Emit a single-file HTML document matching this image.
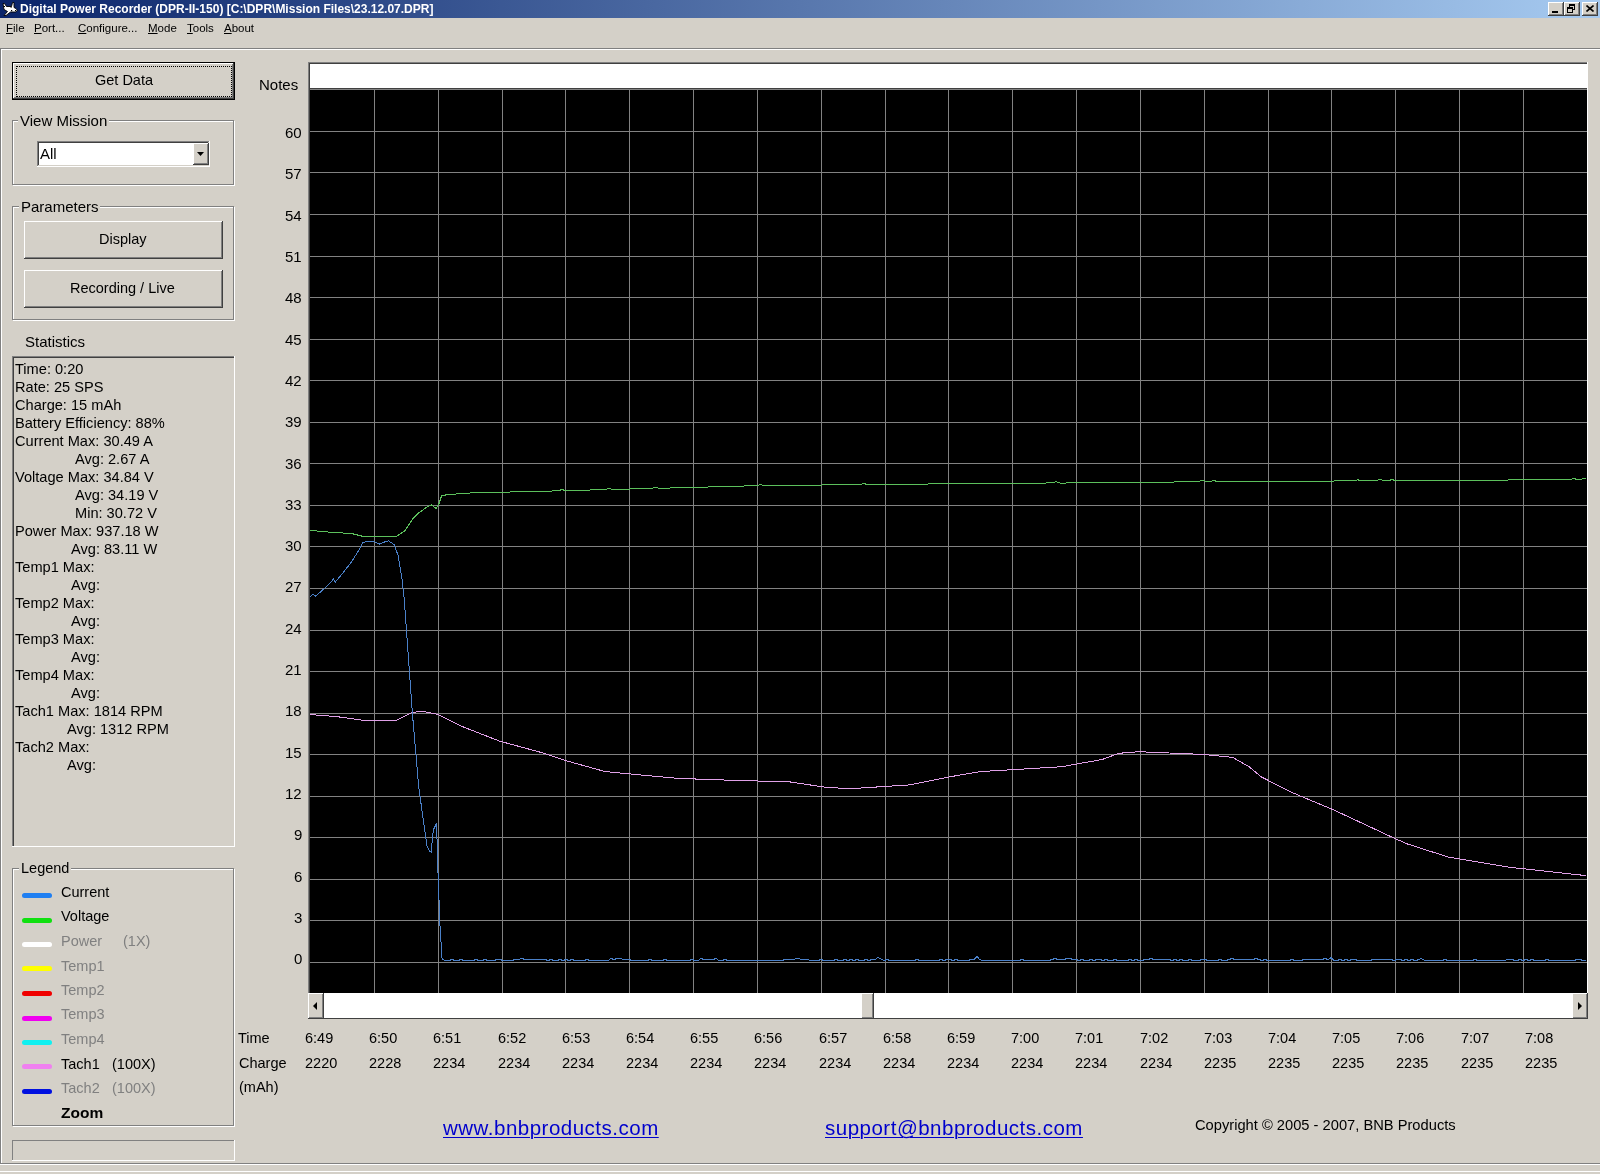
<!DOCTYPE html><html><head><meta charset="utf-8"><style>
html,body{margin:0;padding:0}
body{width:1600px;height:1174px;overflow:hidden;background:#d4d0c8;position:relative;font-family:"Liberation Sans",sans-serif;color:#000}
.t{position:absolute;white-space:nowrap;will-change:transform}
u{text-decoration:underline}
</style></head><body>
<div style="position:absolute;left:0;top:0;width:1600px;height:18px;background:linear-gradient(to right,#0a246a,#a6caf0)"></div>
<div class="t" style="left:20px;top:1.84px;font-size:12px;line-height:14px;color:#fff;font-weight:bold">Digital Power Recorder (DPR-II-150) [C:\DPR\Mission Files\23.12.07.DPR]</div>
<svg style="position:absolute;left:2px;top:2px" width="17" height="15" viewBox="0 0 17 15">
<path d="M1 1.5 L2.5 1.5 L4.5 4.5 L9.5 4.5 L10.5 0.5 L12 0.5 L12 5.5 L14 6.5 L15.5 8.5 L13.5 10 L8.5 10 L4 13.5 L2 13.5 L5.5 9.5 L2 7.5 Z" fill="#fff" stroke="#000" stroke-width="0.9"/><rect x="2" y="4" width="1" height="1" fill="#000"/><rect x="8.5" y="4.5" width="1.2" height="1.2" fill="#000"/><rect x="9" y="8" width="1.2" height="1.2" fill="#000"/><rect x="13" y="8" width="1.2" height="1.2" fill="#000"/>
</svg>
<div style="position:absolute;left:1548px;top:2px;width:16px;height:14px;background:#404040"></div>
<div style="position:absolute;left:1548px;top:2px;width:15px;height:13px;background:#fff"></div>
<div style="position:absolute;left:1549px;top:3px;width:14px;height:12px;background:#808080"></div>
<div style="position:absolute;left:1549px;top:3px;width:13px;height:11px;background:#d4d0c8"></div>
<div style="position:absolute;left:1552px;top:11px;width:6px;height:2px;background:#000"></div>
<div style="position:absolute;left:1564px;top:2px;width:16px;height:14px;background:#404040"></div>
<div style="position:absolute;left:1564px;top:2px;width:15px;height:13px;background:#fff"></div>
<div style="position:absolute;left:1565px;top:3px;width:14px;height:12px;background:#808080"></div>
<div style="position:absolute;left:1565px;top:3px;width:13px;height:11px;background:#d4d0c8"></div>
<svg style="position:absolute;left:1567px;top:4px" width="9" height="9"><rect x="2.5" y="0.5" width="5" height="5" fill="none" stroke="#000"/><rect x="2" y="0" width="6" height="2" fill="#000"/><rect x="0.5" y="3.5" width="5" height="5" fill="#d4d0c8" stroke="#000"/><rect x="0" y="3" width="6" height="2" fill="#000"/></svg>
<div style="position:absolute;left:1582px;top:2px;width:16px;height:14px;background:#404040"></div>
<div style="position:absolute;left:1582px;top:2px;width:15px;height:13px;background:#fff"></div>
<div style="position:absolute;left:1583px;top:3px;width:14px;height:12px;background:#808080"></div>
<div style="position:absolute;left:1583px;top:3px;width:13px;height:11px;background:#d4d0c8"></div>
<svg style="position:absolute;left:1586px;top:5px" width="8" height="7"><path d="M0.5 0.5 L7.5 6.5 M7.5 0.5 L0.5 6.5" stroke="#000" stroke-width="1.6"/></svg>
<div class="t" style="left:6px;top:21.02px;font-size:11.5px;line-height:14px;"><u>F</u>ile</div>
<div class="t" style="left:34px;top:21.02px;font-size:11.5px;line-height:14px;"><u>P</u>ort...</div>
<div class="t" style="left:78px;top:21.02px;font-size:11.5px;line-height:14px;"><u>C</u>onfigure...</div>
<div class="t" style="left:148px;top:21.02px;font-size:11.5px;line-height:14px;"><u>M</u>ode</div>
<div class="t" style="left:187px;top:21.02px;font-size:11.5px;line-height:14px;"><u>T</u>ools</div>
<div class="t" style="left:224px;top:21.02px;font-size:11.5px;line-height:14px;"><u>A</u>bout</div>
<div style="position:absolute;left:0px;top:48px;width:1600px;height:1px;background:#808080"></div>
<div style="position:absolute;left:0px;top:49px;width:1600px;height:1px;background:#fff"></div>
<div style="position:absolute;left:0px;top:48px;width:1px;height:1116px;background:#808080"></div>
<div style="position:absolute;left:1px;top:49px;width:1px;height:1114px;background:#fff"></div>
<div style="position:absolute;left:0px;top:1163px;width:1600px;height:1px;background:#808080"></div>
<div style="position:absolute;left:0px;top:1164px;width:1600px;height:1px;background:#fff"></div>
<div style="position:absolute;left:0px;top:1171px;width:1600px;height:1px;background:#fff"></div>
<div style="position:absolute;left:12px;top:62px;width:223px;height:38px;background:#000"></div>
<div style="position:absolute;left:13px;top:63px;width:221px;height:36px;background:#404040"></div>
<div style="position:absolute;left:13px;top:63px;width:220px;height:35px;background:#fff"></div>
<div style="position:absolute;left:14px;top:64px;width:219px;height:34px;background:#808080"></div>
<div style="position:absolute;left:14px;top:64px;width:218px;height:33px;background:#d4d0c8"></div>
<div style="position:absolute;left:16px;top:66px;width:216px;height:31px;box-sizing:border-box;border:1px dotted #000"></div>
<div class="t" style="left:95px;top:72.48px;font-size:14.5px;line-height:17px;">Get Data</div>
<div style="position:absolute;left:13px;top:121px;width:222px;height:65px;box-sizing:border-box;border:1px solid #fff"></div>
<div style="position:absolute;left:12px;top:120px;width:222px;height:65px;box-sizing:border-box;border:1px solid #808080"></div>
<div style="position:absolute;left:18px;top:118px;width:91px;height:5px;background:#d4d0c8"></div>
<div class="t" style="left:20px;top:111.80px;font-size:15px;line-height:18px;">View Mission</div>
<div style="position:absolute;left:37px;top:141px;width:173px;height:26px;background:#fff"></div>
<div style="position:absolute;left:37px;top:141px;width:172px;height:25px;background:#808080"></div>
<div style="position:absolute;left:38px;top:142px;width:171px;height:24px;background:#d4d0c8"></div>
<div style="position:absolute;left:38px;top:142px;width:170px;height:23px;background:#404040"></div>
<div style="position:absolute;left:39px;top:143px;width:169px;height:22px;background:#fff"></div>
<div style="position:absolute;left:193px;top:143px;width:16px;height:22px;background:#404040"></div>
<div style="position:absolute;left:193px;top:143px;width:15px;height:21px;background:#fff"></div>
<div style="position:absolute;left:194px;top:144px;width:14px;height:20px;background:#808080"></div>
<div style="position:absolute;left:194px;top:144px;width:13px;height:19px;background:#d4d0c8"></div>
<svg style="position:absolute;left:197px;top:152px" width="7" height="4"><path d="M0 0 H7 L3.5 4 Z" fill="#000"/></svg>
<div class="t" style="left:40px;top:144.80px;font-size:15px;line-height:18px;">All</div>
<div style="position:absolute;left:13px;top:207px;width:222px;height:114px;box-sizing:border-box;border:1px solid #fff"></div>
<div style="position:absolute;left:12px;top:206px;width:222px;height:114px;box-sizing:border-box;border:1px solid #808080"></div>
<div style="position:absolute;left:19px;top:204px;width:81px;height:5px;background:#d4d0c8"></div>
<div class="t" style="left:21px;top:197.80px;font-size:15px;line-height:18px;">Parameters</div>
<div style="position:absolute;left:24px;top:221px;width:199px;height:38px;background:#404040"></div>
<div style="position:absolute;left:24px;top:221px;width:198px;height:37px;background:#fff"></div>
<div style="position:absolute;left:25px;top:222px;width:197px;height:36px;background:#808080"></div>
<div style="position:absolute;left:25px;top:222px;width:196px;height:35px;background:#d4d0c8"></div>
<div class="t" style="left:99px;top:231.48px;font-size:14.5px;line-height:17px;">Display</div>
<div style="position:absolute;left:24px;top:270px;width:199px;height:38px;background:#404040"></div>
<div style="position:absolute;left:24px;top:270px;width:198px;height:37px;background:#fff"></div>
<div style="position:absolute;left:25px;top:271px;width:197px;height:36px;background:#808080"></div>
<div style="position:absolute;left:25px;top:271px;width:196px;height:35px;background:#d4d0c8"></div>
<div class="t" style="left:70px;top:280.48px;font-size:14.5px;line-height:17px;">Recording / Live</div>
<div class="t" style="left:25px;top:332.80px;font-size:15px;line-height:18px;">Statistics</div>
<div style="position:absolute;left:12px;top:356px;width:223px;height:491px;background:#fff"></div>
<div style="position:absolute;left:12px;top:356px;width:222px;height:490px;background:#808080"></div>
<div style="position:absolute;left:13px;top:357px;width:221px;height:489px;background:#404040"></div>
<div style="position:absolute;left:14px;top:358px;width:220px;height:488px;background:#d4d0c8"></div>
<div class="t" style="left:15px;top:359.94px;font-size:14.6px;line-height:18px;">Time: 0:20</div>
<div class="t" style="left:15px;top:377.94px;font-size:14.6px;line-height:18px;">Rate: 25 SPS</div>
<div class="t" style="left:15px;top:395.94px;font-size:14.6px;line-height:18px;">Charge: 15 mAh</div>
<div class="t" style="left:15px;top:413.94px;font-size:14.6px;line-height:18px;">Battery Efficiency: 88%</div>
<div class="t" style="left:15px;top:431.94px;font-size:14.6px;line-height:18px;">Current Max: 30.49 A</div>
<div class="t" style="left:75px;top:449.94px;font-size:14.6px;line-height:18px;">Avg: 2.67 A</div>
<div class="t" style="left:15px;top:467.94px;font-size:14.6px;line-height:18px;">Voltage Max: 34.84 V</div>
<div class="t" style="left:75px;top:485.94px;font-size:14.6px;line-height:18px;">Avg: 34.19 V</div>
<div class="t" style="left:75px;top:503.94px;font-size:14.6px;line-height:18px;">Min: 30.72 V</div>
<div class="t" style="left:15px;top:521.94px;font-size:14.6px;line-height:18px;">Power Max: 937.18 W</div>
<div class="t" style="left:71px;top:539.94px;font-size:14.6px;line-height:18px;">Avg: 83.11 W</div>
<div class="t" style="left:15px;top:557.94px;font-size:14.6px;line-height:18px;">Temp1 Max:</div>
<div class="t" style="left:71px;top:575.94px;font-size:14.6px;line-height:18px;">Avg:</div>
<div class="t" style="left:15px;top:593.94px;font-size:14.6px;line-height:18px;">Temp2 Max:</div>
<div class="t" style="left:71px;top:611.94px;font-size:14.6px;line-height:18px;">Avg:</div>
<div class="t" style="left:15px;top:629.94px;font-size:14.6px;line-height:18px;">Temp3 Max:</div>
<div class="t" style="left:71px;top:647.94px;font-size:14.6px;line-height:18px;">Avg:</div>
<div class="t" style="left:15px;top:665.94px;font-size:14.6px;line-height:18px;">Temp4 Max:</div>
<div class="t" style="left:71px;top:683.94px;font-size:14.6px;line-height:18px;">Avg:</div>
<div class="t" style="left:15px;top:701.94px;font-size:14.6px;line-height:18px;">Tach1 Max: 1814 RPM</div>
<div class="t" style="left:67px;top:719.94px;font-size:14.6px;line-height:18px;">Avg: 1312 RPM</div>
<div class="t" style="left:15px;top:737.94px;font-size:14.6px;line-height:18px;">Tach2 Max:</div>
<div class="t" style="left:67px;top:755.94px;font-size:14.6px;line-height:18px;">Avg:</div>
<div style="position:absolute;left:13px;top:869px;width:222px;height:258px;box-sizing:border-box;border:1px solid #fff"></div>
<div style="position:absolute;left:12px;top:868px;width:222px;height:258px;box-sizing:border-box;border:1px solid #808080"></div>
<div style="position:absolute;left:19px;top:866px;width:52px;height:5px;background:#d4d0c8"></div>
<div class="t" style="left:21px;top:860.48px;font-size:14.5px;line-height:17px;">Legend</div>
<div style="position:absolute;left:22px;top:893px;width:30px;height:5px;background:#1f7ff2;border-radius:2.5px"></div>
<div class="t" style="left:61px;top:884.48px;font-size:14.5px;line-height:17px;color:#000">Current</div>
<div style="position:absolute;left:22px;top:918px;width:30px;height:5px;background:#10e010;border-radius:2.5px"></div>
<div class="t" style="left:61px;top:908.48px;font-size:14.5px;line-height:17px;color:#000">Voltage</div>
<div style="position:absolute;left:22px;top:942px;width:30px;height:5px;background:#ffffff;border-radius:2.5px"></div>
<div class="t" style="left:61px;top:933.48px;font-size:14.5px;line-height:17px;color:#808080">Power</div>
<div style="position:absolute;left:22px;top:966px;width:30px;height:5px;background:#ffff00;border-radius:2.5px"></div>
<div class="t" style="left:61px;top:958.48px;font-size:14.5px;line-height:17px;color:#808080">Temp1</div>
<div style="position:absolute;left:22px;top:991px;width:30px;height:5px;background:#f00000;border-radius:2.5px"></div>
<div class="t" style="left:61px;top:982.48px;font-size:14.5px;line-height:17px;color:#808080">Temp2</div>
<div style="position:absolute;left:22px;top:1016px;width:30px;height:5px;background:#f000f0;border-radius:2.5px"></div>
<div class="t" style="left:61px;top:1006.48px;font-size:14.5px;line-height:17px;color:#808080">Temp3</div>
<div style="position:absolute;left:22px;top:1040px;width:30px;height:5px;background:#10f0f0;border-radius:2.5px"></div>
<div class="t" style="left:61px;top:1031.48px;font-size:14.5px;line-height:17px;color:#808080">Temp4</div>
<div style="position:absolute;left:22px;top:1064px;width:30px;height:5px;background:#f080f0;border-radius:2.5px"></div>
<div class="t" style="left:61px;top:1056.48px;font-size:14.5px;line-height:17px;color:#000">Tach1</div>
<div style="position:absolute;left:22px;top:1089px;width:30px;height:5px;background:#0010e0;border-radius:2.5px"></div>
<div class="t" style="left:61px;top:1080.48px;font-size:14.5px;line-height:17px;color:#808080">Tach2</div>
<div class="t" style="left:123px;top:933.48px;font-size:14.5px;line-height:17px;color:#808080">(1X)</div>
<div class="t" style="left:112px;top:1056.48px;font-size:14.5px;line-height:17px;color:#000">(100X)</div>
<div class="t" style="left:112px;top:1080.48px;font-size:14.5px;line-height:17px;color:#808080">(100X)</div>
<div class="t" style="left:61px;top:1103.13px;font-size:15.5px;line-height:19px;font-weight:bold">Zoom</div>
<div style="position:absolute;left:12px;top:1140px;width:223px;height:21px;background:#fff"></div>
<div style="position:absolute;left:12px;top:1140px;width:222px;height:20px;background:#808080"></div>
<div style="position:absolute;left:13px;top:1141px;width:221px;height:19px;background:#d4d0c8"></div>
<div style="position:absolute;left:308px;top:62px;width:1280px;height:931px;background:#fff"></div>
<div style="position:absolute;left:308px;top:62px;width:1279px;height:931px;background:#808080"></div>
<div style="position:absolute;left:309px;top:63px;width:1278px;height:930px;background:#404040"></div>
<div style="position:absolute;left:310px;top:64px;width:1277px;height:24px;background:#fff"></div>
<div class="t" style="left:259px;top:75.80px;font-size:15px;line-height:18px;">Notes</div>
<svg style="position:absolute;left:0;top:0" width="1600" height="1174">
<rect x="310" y="89" width="1277" height="904" fill="#000"/>
<path d="M310 89.5H1587 M310 131.5H1587 M310 172.5H1587 M310 214.5H1587 M310 256.5H1587 M310 297.5H1587 M310 339.5H1587 M310 380.5H1587 M310 422.5H1587 M310 463.5H1587 M310 505.5H1587 M310 546.5H1587 M310 588.5H1587 M310 630.5H1587 M310 671.5H1587 M310 713.5H1587 M310 754.5H1587 M310 796.5H1587 M310 837.5H1587 M310 879.5H1587 M310 920.5H1587 M310 962.5H1587 M374.5 89V993 M438.5 89V993 M502.5 89V993 M565.5 89V993 M629.5 89V993 M693.5 89V993 M757.5 89V993 M821.5 89V993 M885.5 89V993 M948.5 89V993 M1012.5 89V993 M1076.5 89V993 M1140.5 89V993 M1204.5 89V993 M1268.5 89V993 M1331.5 89V993 M1395.5 89V993 M1459.5 89V993 M1523.5 89V993" stroke="#828282" stroke-width="1" fill="none"/>
<svg x="310" y="89" width="1277" height="904" overflow="hidden"><g transform="translate(-310,-89)">
<polyline fill="none" shape-rendering="crispEdges" stroke="#e0a0e8" stroke-width="1" points="309.0,714.5 336.6,716.6 365.0,720.6 395.5,720.6 411.7,712.5 422.0,711.3 438.2,714.5 462.6,726.7 499.2,741.0 543.9,753.2 568.3,761.3 604.9,771.5 625.2,773.5 678.0,778.4 747.2,780.8 787.8,781.6 828.5,787.7 852.8,788.5 909.8,784.9 950.4,776.7 980.6,771.6 1061.9,766.7 1102.5,759.4 1118.8,753.3 1139.1,751.7 1204.2,754.5 1232.7,757.4 1249.0,766.7 1261.2,776.9 1293.7,793.2 1334.3,810.2 1395.3,838.7 1407.5,844.0 1448.1,857.0 1509.0,867.2 1586.0,875.6"/>
<polyline fill="none" shape-rendering="crispEdges" stroke="#5cc05c" stroke-width="1" points="309.5,530.4 315.0,530.8 330.0,532.2 351.8,533.6 362.7,536.3 389.9,537.0 396.7,536.3 404.9,530.8 413.0,518.6 418.5,513.1 428.0,506.3 431.5,505.0 436.2,508.4 439.0,503.6 441.7,495.4 448.5,494.7 463.5,493.4 481.2,492.4 482.0,492.4 484.0,492.4 486.0,492.3 488.0,492.3 490.0,492.3 492.0,492.2 494.0,492.2 496.0,492.2 498.0,492.2 500.0,492.1 502.0,492.1 504.0,492.1 506.0,492.0 508.0,492.0 510.0,492.0 512.0,491.9 514.0,491.9 516.0,491.9 518.0,491.8 520.0,491.8 522.0,491.7 524.0,491.7 526.0,491.6 528.0,491.6 530.0,491.5 532.0,491.5 534.0,491.4 536.0,491.4 538.0,491.3 540.0,491.3 542.0,491.2 544.0,491.2 546.0,491.1 548.0,491.1 550.0,491.0 552.0,491.0 554.0,490.9 556.0,490.9 558.0,490.8 560.0,490.2 562.0,489.3 564.0,490.2 566.0,490.6 568.0,490.6 570.0,490.5 572.0,490.5 574.0,490.4 576.0,490.4 578.0,490.3 580.0,490.3 582.0,490.2 584.0,490.2 586.0,490.1 588.0,490.1 590.0,490.0 592.0,489.9 594.0,489.9 596.0,489.8 598.0,489.8 600.0,489.7 602.0,489.7 604.0,489.6 606.0,489.4 608.0,488.4 610.0,488.6 612.0,489.4 614.0,489.4 616.0,489.3 618.0,489.3 620.0,489.2 622.0,489.2 624.0,489.1 626.0,489.1 628.0,489.0 630.0,489.0 632.0,488.9 634.0,488.9 636.0,488.8 638.0,488.8 640.0,488.7 642.0,488.7 644.0,488.6 646.0,488.6 648.0,488.5 650.0,488.5 652.0,488.4 654.0,487.7 656.0,487.0 658.0,488.0 660.0,488.2 662.0,488.2 664.0,488.1 666.0,488.1 668.0,488.0 670.0,488.0 672.0,487.9 674.0,487.9 676.0,487.8 678.0,487.8 680.0,487.7 682.0,487.6 684.0,487.6 686.0,487.5 688.0,487.5 690.0,487.4 692.0,487.4 694.0,487.3 696.0,487.3 698.0,487.2 700.0,487.2 702.0,487.1 704.0,487.1 706.0,487.0 708.0,487.0 710.0,486.9 712.0,486.8 714.0,486.8 716.0,486.7 718.0,486.7 720.0,486.6 722.0,486.6 724.0,486.5 726.0,486.5 728.0,486.4 730.0,486.4 732.0,486.3 734.0,486.3 736.0,486.2 738.0,486.2 740.0,486.1 742.0,486.0 744.0,486.0 746.0,485.9 748.0,485.9 750.0,485.8 752.0,485.8 754.0,485.7 756.0,485.7 758.0,485.5 760.0,484.8 762.0,485.0 764.0,485.5 766.0,485.5 768.0,485.4 770.0,485.4 772.0,485.4 774.0,485.4 776.0,485.4 778.0,485.4 780.0,485.3 782.0,485.3 784.0,485.3 786.0,485.3 788.0,485.3 790.0,485.2 792.0,485.2 794.0,485.2 796.0,485.2 798.0,485.2 800.0,485.2 802.0,485.1 804.0,485.1 806.0,485.1 808.0,485.1 810.0,485.1 812.0,485.0 814.0,485.0 816.0,485.0 818.0,485.0 820.0,485.0 822.0,485.0 824.0,484.9 826.0,484.9 828.0,484.9 830.0,484.9 832.0,484.9 834.0,484.8 836.0,484.8 838.0,484.8 840.0,484.8 842.0,484.8 844.0,484.8 846.0,484.7 848.0,484.7 850.0,484.7 852.0,484.7 854.0,484.7 856.0,484.6 858.0,484.6 860.0,484.6 862.0,483.9 864.0,483.2 866.0,484.2 868.0,484.5 870.0,484.5 872.0,484.5 874.0,484.5 876.0,484.5 878.0,484.4 880.0,484.4 882.0,484.4 884.0,484.4 886.0,484.4 888.0,484.4 890.0,484.3 892.0,484.3 894.0,484.3 896.0,484.3 898.0,484.3 900.0,484.2 902.0,484.2 904.0,484.2 906.0,484.2 908.0,484.2 910.0,484.2 912.0,484.1 914.0,484.1 916.0,484.1 918.0,484.1 920.0,484.1 922.0,484.0 924.0,484.0 926.0,484.0 928.0,484.0 930.0,483.4 932.0,483.2 934.0,483.9 936.0,483.9 938.0,483.9 940.0,483.9 942.0,483.9 944.0,483.9 946.0,483.9 948.0,483.9 950.0,483.8 952.0,483.8 954.0,483.8 956.0,483.8 958.0,483.8 960.0,483.8 962.0,483.8 964.0,483.7 966.0,483.7 968.0,483.7 970.0,483.7 972.0,483.7 974.0,483.7 976.0,483.7 978.0,483.6 980.0,483.6 982.0,483.6 984.0,483.6 986.0,483.6 988.0,483.6 990.0,483.6 992.0,483.5 994.0,483.5 996.0,483.5 998.0,483.5 1000.0,483.5 1002.0,483.5 1004.0,483.5 1006.0,483.4 1008.0,483.4 1010.0,483.4 1012.0,483.4 1014.0,483.4 1016.0,483.4 1018.0,483.4 1020.0,483.3 1022.0,483.3 1024.0,483.3 1026.0,483.3 1028.0,483.3 1030.0,483.3 1032.0,483.3 1034.0,483.2 1036.0,483.2 1038.0,483.2 1040.0,483.2 1042.0,483.2 1044.0,483.2 1046.0,483.0 1048.0,482.0 1050.0,482.3 1052.0,483.1 1054.0,482.6 1056.0,481.6 1058.0,482.5 1060.0,483.0 1062.0,483.0 1064.0,483.0 1066.0,483.0 1068.0,482.9 1070.0,482.9 1072.0,482.9 1074.0,482.9 1076.0,482.9 1078.0,482.8 1080.0,482.8 1082.0,482.8 1084.0,482.8 1086.0,482.8 1088.0,482.8 1090.0,482.7 1092.0,482.7 1094.0,482.7 1096.0,482.7 1098.0,482.7 1100.0,482.6 1102.0,482.6 1104.0,482.6 1106.0,482.6 1108.0,482.6 1110.0,482.6 1112.0,482.5 1114.0,482.5 1116.0,482.5 1118.0,482.5 1120.0,482.5 1122.0,482.4 1124.0,482.4 1126.0,482.4 1128.0,482.4 1130.0,482.4 1132.0,482.4 1134.0,482.3 1136.0,482.3 1138.0,482.3 1140.0,482.3 1142.0,482.3 1144.0,482.2 1146.0,482.2 1148.0,482.2 1150.0,482.2 1152.0,482.2 1154.0,482.1 1156.0,482.1 1158.0,482.1 1160.0,482.1 1162.0,482.1 1164.0,482.1 1166.0,482.0 1168.0,482.0 1170.0,482.0 1172.0,482.0 1174.0,482.0 1176.0,481.9 1178.0,481.9 1180.0,481.9 1182.0,481.9 1184.0,481.9 1186.0,481.9 1188.0,481.8 1190.0,481.8 1192.0,481.8 1194.0,481.8 1196.0,481.8 1198.0,481.7 1200.0,481.0 1202.0,480.0 1204.0,480.4 1206.0,481.4 1208.0,481.7 1210.0,481.7 1212.0,481.0 1214.0,480.3 1216.0,481.3 1218.0,481.6 1220.0,481.6 1222.0,481.6 1224.0,481.6 1226.0,481.6 1228.0,481.6 1230.0,481.5 1232.0,481.5 1234.0,481.5 1236.0,481.5 1238.0,481.5 1240.0,481.5 1242.0,481.5 1244.0,481.5 1246.0,481.5 1248.0,481.4 1250.0,481.4 1252.0,481.4 1254.0,481.4 1256.0,481.4 1258.0,481.4 1260.0,481.4 1262.0,481.4 1264.0,481.4 1266.0,481.3 1268.0,481.3 1270.0,481.3 1272.0,481.3 1274.0,481.3 1276.0,481.3 1278.0,481.3 1280.0,481.3 1282.0,481.3 1284.0,481.2 1286.0,481.2 1288.0,481.2 1290.0,481.2 1292.0,481.2 1294.0,481.2 1296.0,481.2 1298.0,481.2 1300.0,481.1 1302.0,481.1 1304.0,481.1 1306.0,481.1 1308.0,481.1 1310.0,481.1 1312.0,481.1 1314.0,481.1 1316.0,481.1 1318.0,481.0 1320.0,481.0 1322.0,481.0 1324.0,481.0 1326.0,481.0 1328.0,481.0 1330.0,481.0 1332.0,481.0 1334.0,481.0 1336.0,480.9 1338.0,480.9 1340.0,480.9 1342.0,480.9 1344.0,480.9 1346.0,480.9 1348.0,480.9 1350.0,480.9 1352.0,480.9 1354.0,480.8 1356.0,480.5 1358.0,479.8 1360.0,480.5 1362.0,480.8 1364.0,480.8 1366.0,480.8 1368.0,480.8 1370.0,480.8 1372.0,480.7 1374.0,480.7 1376.0,480.7 1378.0,480.1 1380.0,479.5 1382.0,480.1 1384.0,480.7 1386.0,480.7 1388.0,480.7 1390.0,480.2 1392.0,479.4 1394.0,480.2 1396.0,480.6 1398.0,480.6 1400.0,480.6 1402.0,480.6 1404.0,480.6 1406.0,480.6 1408.0,480.5 1410.0,480.5 1412.0,480.5 1414.0,480.5 1416.0,480.5 1418.0,480.5 1420.0,480.5 1422.0,480.5 1424.0,480.4 1426.0,480.4 1428.0,480.4 1430.0,480.4 1432.0,480.4 1434.0,480.4 1436.0,480.4 1438.0,480.4 1440.0,480.4 1442.0,480.3 1444.0,480.3 1446.0,480.3 1448.0,480.3 1450.0,480.3 1452.0,480.3 1454.0,480.3 1456.0,480.3 1458.0,480.2 1460.0,480.2 1462.0,480.2 1464.0,480.2 1466.0,480.2 1468.0,480.2 1470.0,480.2 1472.0,480.2 1474.0,480.2 1476.0,480.1 1478.0,480.1 1480.0,480.1 1482.0,480.1 1484.0,480.1 1486.0,480.1 1488.0,480.1 1490.0,480.1 1492.0,480.1 1494.0,480.0 1496.0,480.0 1498.0,480.0 1500.0,480.0 1502.0,480.0 1504.0,480.0 1506.0,480.0 1508.0,480.0 1510.0,479.9 1512.0,479.9 1514.0,479.9 1516.0,479.9 1518.0,479.9 1520.0,479.9 1522.0,479.9 1524.0,479.9 1526.0,479.9 1528.0,479.8 1530.0,479.8 1532.0,479.8 1534.0,479.8 1536.0,479.8 1538.0,479.8 1540.0,479.8 1542.0,479.8 1544.0,479.7 1546.0,479.7 1548.0,479.7 1550.0,479.7 1552.0,479.7 1554.0,479.7 1556.0,479.7 1558.0,479.7 1560.0,479.7 1562.0,479.6 1564.0,479.6 1566.0,479.6 1568.0,479.6 1570.0,479.6 1572.0,478.9 1574.0,478.2 1576.0,479.2 1578.0,479.6 1580.0,479.5 1582.0,478.9 1584.0,478.1 1586.0,479.1"/>
<polyline fill="none" shape-rendering="crispEdges" stroke="#4a80c8" stroke-width="1" points="309.5,597.6 313.0,594.2 315.7,596.2 327.2,586.0 333.4,579.2 335.4,582.0 342.2,573.8 351.8,561.5 358.6,550.6 362.7,542.4 368.1,541.3 373.6,541.3 379.0,544.2 383.1,542.4 388.6,540.8 394.0,544.5 398.1,555.4 402.2,579.9 404.3,600.0 412.4,713.3 418.8,787.7 427.0,846.0 429.2,850.8 431.1,851.8 433.4,829.8 436.6,823.3 437.6,862.0 439.9,923.6 442.1,959.2 444.7,960.4 446.0,960.5 449.0,960.5 452.0,959.5 455.0,960.5 458.0,960.5 461.0,959.5 464.0,960.5 467.0,960.5 470.0,960.5 473.0,960.5 476.0,959.5 479.0,960.5 482.0,960.5 485.0,959.5 488.0,960.5 491.0,960.5 494.0,960.5 497.0,959.5 500.0,959.5 503.0,960.5 506.0,960.5 509.0,960.5 512.0,960.5 515.0,959.5 518.0,960.0 521.0,958.6 524.0,959.1 527.0,959.3 530.0,959.5 533.0,959.5 536.0,959.5 539.0,959.5 542.0,959.5 545.0,959.5 548.0,960.5 551.0,959.5 554.0,960.5 557.0,960.5 560.0,959.5 563.0,960.5 566.0,959.5 569.0,960.5 572.0,959.5 575.0,960.5 578.0,960.5 581.0,960.5 584.0,960.5 587.0,959.5 590.0,960.5 593.0,960.5 596.0,960.5 599.0,960.5 602.0,960.5 605.0,960.5 608.0,960.5 611.0,958.5 614.0,959.5 617.0,958.5 620.0,958.0 623.0,959.5 626.0,959.5 629.0,959.5 632.0,960.5 635.0,960.5 638.0,960.5 641.0,960.5 644.0,960.5 647.0,960.5 650.0,959.5 653.0,960.5 656.0,960.5 659.0,960.5 662.0,960.5 665.0,959.5 668.0,960.5 671.0,960.5 674.0,960.5 677.0,960.5 680.0,960.5 683.0,960.5 686.0,960.5 689.0,960.5 692.0,959.5 695.0,960.5 698.0,960.5 701.0,958.5 704.0,959.5 707.0,959.2 710.0,959.3 713.0,959.5 716.0,958.5 719.0,960.5 722.0,960.5 725.0,959.5 728.0,960.5 731.0,960.5 734.0,960.5 737.0,960.5 740.0,960.5 743.0,960.5 746.0,960.5 749.0,960.5 752.0,960.5 755.0,960.5 758.0,960.5 761.0,960.5 764.0,960.5 767.0,960.5 770.0,960.5 773.0,960.5 776.0,960.5 779.0,960.5 782.0,960.5 785.0,959.5 788.0,959.5 791.0,959.5 794.0,959.5 797.0,958.3 800.0,959.0 803.0,959.3 806.0,959.6 809.0,960.0 812.0,960.3 815.0,960.5 818.0,960.5 821.0,959.5 824.0,960.5 827.0,960.5 830.0,960.5 833.0,960.5 836.0,959.5 839.0,960.5 842.0,960.5 845.0,959.5 848.0,960.5 851.0,959.5 854.0,960.5 857.0,959.5 860.0,960.5 863.0,960.5 866.0,959.5 869.0,960.5 872.0,959.5 875.0,959.5 878.0,957.4 881.0,958.8 884.0,960.5 887.0,959.5 890.0,960.5 893.0,960.5 896.0,960.5 899.0,960.5 902.0,960.5 905.0,960.5 908.0,960.5 911.0,960.5 914.0,960.5 917.0,959.5 920.0,960.5 923.0,960.5 926.0,960.5 929.0,960.5 932.0,960.5 935.0,960.5 938.0,960.5 941.0,959.5 944.0,960.5 947.0,959.5 950.0,959.5 953.0,960.5 956.0,959.5 959.0,960.5 962.0,960.5 965.0,960.5 968.0,960.5 971.0,959.5 974.0,959.8 977.0,956.5 980.0,959.8 983.0,960.5 986.0,960.5 989.0,960.5 992.0,960.5 995.0,960.5 998.0,960.5 1001.0,960.5 1004.0,960.5 1007.0,960.5 1010.0,960.5 1013.0,960.5 1016.0,960.5 1019.0,960.5 1022.0,959.5 1025.0,960.5 1028.0,960.5 1031.0,960.5 1034.0,960.5 1037.0,960.5 1040.0,960.5 1043.0,960.5 1046.0,960.5 1049.0,960.5 1052.0,959.5 1055.0,958.5 1058.0,959.5 1061.0,959.5 1064.0,959.5 1067.0,958.5 1070.0,958.5 1073.0,959.5 1076.0,959.5 1079.0,960.5 1082.0,959.5 1085.0,960.5 1088.0,960.5 1091.0,959.5 1094.0,960.5 1097.0,959.5 1100.0,959.5 1103.0,960.5 1106.0,959.5 1109.0,960.5 1112.0,960.5 1115.0,959.5 1118.0,960.5 1121.0,960.5 1124.0,960.5 1127.0,960.5 1130.0,959.5 1133.0,960.5 1136.0,959.5 1139.0,960.5 1142.0,960.5 1145.0,959.5 1148.0,959.5 1151.0,958.5 1154.0,959.5 1157.0,959.5 1160.0,959.5 1163.0,959.5 1166.0,959.5 1169.0,959.5 1172.0,960.5 1175.0,959.5 1178.0,960.5 1181.0,959.5 1184.0,960.5 1187.0,960.5 1190.0,959.5 1193.0,960.5 1196.0,960.5 1199.0,960.5 1202.0,959.5 1205.0,959.5 1208.0,960.5 1211.0,960.5 1214.0,960.5 1217.0,960.5 1220.0,959.5 1223.0,960.5 1226.0,960.5 1229.0,959.5 1232.0,958.5 1235.0,959.5 1238.0,959.5 1241.0,959.5 1244.0,959.5 1247.0,959.5 1250.0,959.5 1253.0,959.5 1256.0,958.5 1259.0,959.5 1262.0,960.5 1265.0,959.5 1268.0,960.5 1271.0,960.5 1274.0,960.5 1277.0,960.5 1280.0,960.5 1283.0,960.5 1286.0,960.5 1289.0,960.5 1292.0,959.5 1295.0,960.5 1298.0,960.5 1301.0,960.5 1304.0,959.5 1307.0,959.5 1310.0,959.5 1313.0,959.5 1316.0,959.5 1319.0,959.5 1322.0,959.5 1325.0,958.5 1328.0,959.5 1331.0,957.6 1334.0,960.5 1337.0,960.5 1340.0,959.5 1343.0,960.5 1346.0,959.5 1349.0,960.5 1352.0,959.5 1355.0,959.5 1358.0,960.5 1361.0,960.5 1364.0,960.5 1367.0,960.5 1370.0,960.5 1373.0,959.5 1376.0,959.5 1379.0,959.5 1382.0,959.5 1385.0,959.5 1388.0,959.5 1391.0,959.5 1394.0,960.5 1397.0,959.5 1400.0,959.5 1403.0,960.5 1406.0,959.5 1409.0,960.5 1412.0,959.5 1415.0,960.5 1418.0,959.9 1421.0,958.6 1424.0,960.1 1427.0,960.5 1430.0,960.5 1433.0,960.5 1436.0,960.5 1439.0,960.5 1442.0,960.5 1445.0,959.5 1448.0,960.5 1451.0,960.5 1454.0,960.5 1457.0,960.5 1460.0,960.5 1463.0,960.5 1466.0,960.5 1469.0,960.5 1472.0,960.5 1475.0,959.5 1478.0,960.5 1481.0,960.5 1484.0,960.5 1487.0,960.5 1490.0,960.5 1493.0,960.5 1496.0,960.5 1499.0,960.5 1502.0,960.5 1505.0,960.4 1508.0,959.2 1511.0,959.0 1514.0,960.2 1517.0,960.5 1520.0,959.5 1523.0,960.5 1526.0,959.5 1529.0,960.5 1532.0,959.5 1535.0,960.5 1538.0,960.5 1541.0,960.5 1544.0,960.5 1547.0,959.5 1550.0,960.5 1553.0,960.5 1556.0,960.5 1559.0,960.5 1562.0,960.5 1565.0,960.5 1568.0,960.5 1571.0,960.5 1574.0,960.5 1577.0,959.5 1580.0,959.5 1583.0,960.5 1586.0,960.5"/>
</g></svg>
</svg>
<div class="t" style="right:1298px;top:124.1px;font-size:15px;line-height:18px;text-align:right">60</div>
<div class="t" style="right:1298px;top:165.4px;font-size:15px;line-height:18px;text-align:right">57</div>
<div class="t" style="right:1298px;top:206.7px;font-size:15px;line-height:18px;text-align:right">54</div>
<div class="t" style="right:1298px;top:248.0px;font-size:15px;line-height:18px;text-align:right">51</div>
<div class="t" style="right:1298px;top:289.3px;font-size:15px;line-height:18px;text-align:right">48</div>
<div class="t" style="right:1298px;top:330.6px;font-size:15px;line-height:18px;text-align:right">45</div>
<div class="t" style="right:1298px;top:371.9px;font-size:15px;line-height:18px;text-align:right">42</div>
<div class="t" style="right:1298px;top:413.2px;font-size:15px;line-height:18px;text-align:right">39</div>
<div class="t" style="right:1298px;top:454.5px;font-size:15px;line-height:18px;text-align:right">36</div>
<div class="t" style="right:1298px;top:495.8px;font-size:15px;line-height:18px;text-align:right">33</div>
<div class="t" style="right:1298px;top:537.1px;font-size:15px;line-height:18px;text-align:right">30</div>
<div class="t" style="right:1298px;top:578.4px;font-size:15px;line-height:18px;text-align:right">27</div>
<div class="t" style="right:1298px;top:619.7px;font-size:15px;line-height:18px;text-align:right">24</div>
<div class="t" style="right:1298px;top:661.0px;font-size:15px;line-height:18px;text-align:right">21</div>
<div class="t" style="right:1298px;top:702.3px;font-size:15px;line-height:18px;text-align:right">18</div>
<div class="t" style="right:1298px;top:743.6px;font-size:15px;line-height:18px;text-align:right">15</div>
<div class="t" style="right:1298px;top:784.9px;font-size:15px;line-height:18px;text-align:right">12</div>
<div class="t" style="right:1298px;top:826.2px;font-size:15px;line-height:18px;text-align:right">9</div>
<div class="t" style="right:1298px;top:867.5px;font-size:15px;line-height:18px;text-align:right">6</div>
<div class="t" style="right:1298px;top:908.8px;font-size:15px;line-height:18px;text-align:right">3</div>
<div class="t" style="right:1298px;top:950.1px;font-size:15px;line-height:18px;text-align:right">0</div>
<div style="position:absolute;left:308px;top:993px;width:1280px;height:26px;background:#404040"></div>
<div style="position:absolute;left:308px;top:993px;width:1279px;height:25px;background:#fff"></div>
<div style="position:absolute;left:308px;top:993px;width:16px;height:26px;background:#404040"></div>
<div style="position:absolute;left:308px;top:993px;width:15px;height:25px;background:#fff"></div>
<div style="position:absolute;left:309px;top:994px;width:14px;height:24px;background:#808080"></div>
<div style="position:absolute;left:309px;top:994px;width:13px;height:23px;background:#d4d0c8"></div>
<svg style="position:absolute;left:313px;top:1002px" width="4" height="8"><path d="M4 0 V8 L0 4 Z" fill="#000"/></svg>
<div style="position:absolute;left:1572px;top:993px;width:16px;height:26px;background:#404040"></div>
<div style="position:absolute;left:1572px;top:993px;width:15px;height:25px;background:#fff"></div>
<div style="position:absolute;left:1573px;top:994px;width:14px;height:24px;background:#808080"></div>
<div style="position:absolute;left:1573px;top:994px;width:13px;height:23px;background:#d4d0c8"></div>
<svg style="position:absolute;left:1578px;top:1002px" width="4" height="8"><path d="M0 0 V8 L4 4 Z" fill="#000"/></svg>
<div style="position:absolute;left:861px;top:993px;width:13px;height:26px;background:#404040"></div>
<div style="position:absolute;left:861px;top:993px;width:12px;height:25px;background:#fff"></div>
<div style="position:absolute;left:862px;top:994px;width:11px;height:24px;background:#808080"></div>
<div style="position:absolute;left:862px;top:994px;width:10px;height:23px;background:#d4d0c8"></div>
<div class="t" style="left:238px;top:1030.48px;font-size:14.5px;line-height:17px;">Time</div>
<div class="t" style="left:239px;top:1055.48px;font-size:14.5px;line-height:17px;">Charge</div>
<div class="t" style="left:239px;top:1079.48px;font-size:14.5px;line-height:17px;">(mAh)</div>
<div class="t" style="left:305px;top:1030.48px;font-size:14.5px;line-height:17px;">6:49</div>
<div class="t" style="left:305px;top:1055.48px;font-size:14.5px;line-height:17px;">2220</div>
<div class="t" style="left:369px;top:1030.48px;font-size:14.5px;line-height:17px;">6:50</div>
<div class="t" style="left:369px;top:1055.48px;font-size:14.5px;line-height:17px;">2228</div>
<div class="t" style="left:433px;top:1030.48px;font-size:14.5px;line-height:17px;">6:51</div>
<div class="t" style="left:433px;top:1055.48px;font-size:14.5px;line-height:17px;">2234</div>
<div class="t" style="left:498px;top:1030.48px;font-size:14.5px;line-height:17px;">6:52</div>
<div class="t" style="left:498px;top:1055.48px;font-size:14.5px;line-height:17px;">2234</div>
<div class="t" style="left:562px;top:1030.48px;font-size:14.5px;line-height:17px;">6:53</div>
<div class="t" style="left:562px;top:1055.48px;font-size:14.5px;line-height:17px;">2234</div>
<div class="t" style="left:626px;top:1030.48px;font-size:14.5px;line-height:17px;">6:54</div>
<div class="t" style="left:626px;top:1055.48px;font-size:14.5px;line-height:17px;">2234</div>
<div class="t" style="left:690px;top:1030.48px;font-size:14.5px;line-height:17px;">6:55</div>
<div class="t" style="left:690px;top:1055.48px;font-size:14.5px;line-height:17px;">2234</div>
<div class="t" style="left:754px;top:1030.48px;font-size:14.5px;line-height:17px;">6:56</div>
<div class="t" style="left:754px;top:1055.48px;font-size:14.5px;line-height:17px;">2234</div>
<div class="t" style="left:819px;top:1030.48px;font-size:14.5px;line-height:17px;">6:57</div>
<div class="t" style="left:819px;top:1055.48px;font-size:14.5px;line-height:17px;">2234</div>
<div class="t" style="left:883px;top:1030.48px;font-size:14.5px;line-height:17px;">6:58</div>
<div class="t" style="left:883px;top:1055.48px;font-size:14.5px;line-height:17px;">2234</div>
<div class="t" style="left:947px;top:1030.48px;font-size:14.5px;line-height:17px;">6:59</div>
<div class="t" style="left:947px;top:1055.48px;font-size:14.5px;line-height:17px;">2234</div>
<div class="t" style="left:1011px;top:1030.48px;font-size:14.5px;line-height:17px;">7:00</div>
<div class="t" style="left:1011px;top:1055.48px;font-size:14.5px;line-height:17px;">2234</div>
<div class="t" style="left:1075px;top:1030.48px;font-size:14.5px;line-height:17px;">7:01</div>
<div class="t" style="left:1075px;top:1055.48px;font-size:14.5px;line-height:17px;">2234</div>
<div class="t" style="left:1140px;top:1030.48px;font-size:14.5px;line-height:17px;">7:02</div>
<div class="t" style="left:1140px;top:1055.48px;font-size:14.5px;line-height:17px;">2234</div>
<div class="t" style="left:1204px;top:1030.48px;font-size:14.5px;line-height:17px;">7:03</div>
<div class="t" style="left:1204px;top:1055.48px;font-size:14.5px;line-height:17px;">2235</div>
<div class="t" style="left:1268px;top:1030.48px;font-size:14.5px;line-height:17px;">7:04</div>
<div class="t" style="left:1268px;top:1055.48px;font-size:14.5px;line-height:17px;">2235</div>
<div class="t" style="left:1332px;top:1030.48px;font-size:14.5px;line-height:17px;">7:05</div>
<div class="t" style="left:1332px;top:1055.48px;font-size:14.5px;line-height:17px;">2235</div>
<div class="t" style="left:1396px;top:1030.48px;font-size:14.5px;line-height:17px;">7:06</div>
<div class="t" style="left:1396px;top:1055.48px;font-size:14.5px;line-height:17px;">2235</div>
<div class="t" style="left:1461px;top:1030.48px;font-size:14.5px;line-height:17px;">7:07</div>
<div class="t" style="left:1461px;top:1055.48px;font-size:14.5px;line-height:17px;">2235</div>
<div class="t" style="left:1525px;top:1030.48px;font-size:14.5px;line-height:17px;">7:08</div>
<div class="t" style="left:1525px;top:1055.48px;font-size:14.5px;line-height:17px;">2235</div>
<div class="t" style="left:443px;top:1115.40px;font-size:20.5px;line-height:25px;color:#0000cc;text-decoration:underline;text-decoration-thickness:1px;text-underline-offset:2px;letter-spacing:0.5px">www.bnbproducts.com</div>
<div class="t" style="left:825px;top:1115.40px;font-size:20.5px;line-height:25px;color:#0000cc;text-decoration:underline;text-decoration-thickness:1px;text-underline-offset:2px;letter-spacing:0.5px">support@bnbproducts.com</div>
<div class="t" style="left:1195px;top:1115.91px;font-size:14.7px;line-height:18px;">Copyright &copy; 2005 - 2007, BNB Products</div>
</body></html>
